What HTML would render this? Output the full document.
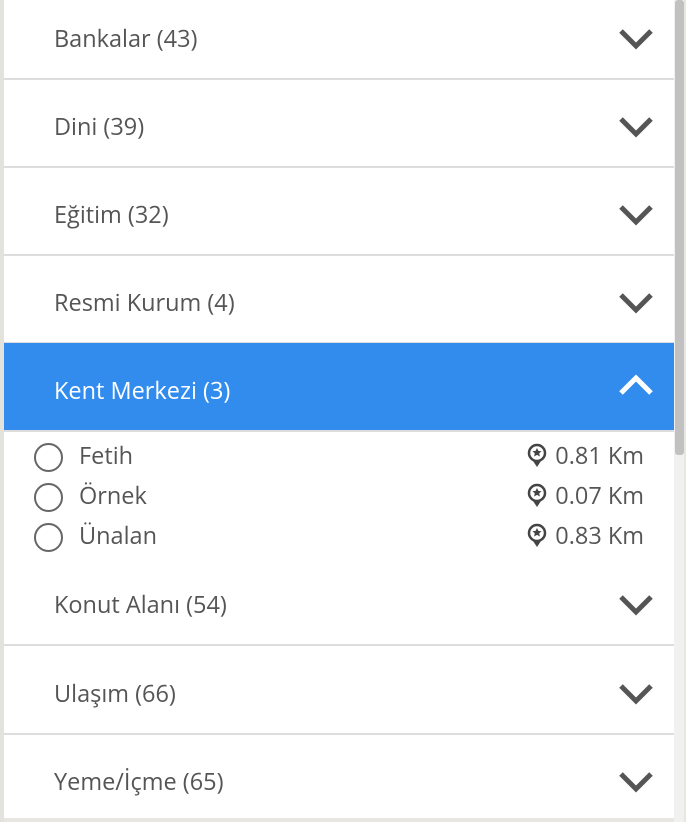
<!DOCTYPE html><html><head><style>
body{margin:0;width:686px;height:822px;overflow:hidden;background:#e8e6e1;font-family:"Open Sans","Liberation Sans",sans-serif;position:relative}
.map{position:absolute;left:0;top:0;width:4px;height:822px;background:#e4e2dc}
.panel{position:absolute;left:4px;top:0;width:670px;height:818px;background:#fff;overflow:hidden}
.sb{position:absolute;left:674px;top:0;width:10px;height:822px;background:#f1f1f1}
.th{position:absolute;left:675px;top:0;width:9px;height:455px;background:#c1c1c1;border-radius:3px}
.row{position:absolute;left:0;width:670px;height:87px;border-bottom:2px solid #ddd;color:#555;font-size:23.5px}
.row span{position:absolute;left:50px;top:50%;transform:translateY(-50%);margin-top:3px}
.row svg{position:absolute;left:614px;top:50%;margin-top:-7px}
.act{background:#318cee;color:#fff}
.it{position:absolute;left:30px;width:610px;height:40px;font-size:23.5px;color:#555}
.it .c{position:absolute;left:0;top:7px;width:25px;height:25px;border:2px solid #666;border-radius:50%}
.it .n{position:absolute;left:45px;top:3px}
.it .d{position:absolute;right:0;top:3px}
.it svg{position:absolute;left:492px;top:7px}
</style></head><body>
<div class="map"></div>
<div class="panel">
<div class="row" style="top:-9px"><span>Bankalar (43)</span><svg width="36" height="22"><path d="M3 3 L18 18 L33 3" stroke="#555" stroke-width="5" fill="none"/></svg></div>
<div class="row" style="top:79px"><span>Dini (39)</span><svg width="36" height="22"><path d="M3 3 L18 18 L33 3" stroke="#555" stroke-width="5" fill="none"/></svg></div>
<div class="row" style="top:167px"><span>Eğitim (32)</span><svg width="36" height="22"><path d="M3 3 L18 18 L33 3" stroke="#555" stroke-width="5" fill="none"/></svg></div>
<div class="row" style="top:255px"><span>Resmi Kurum (4)</span><svg width="36" height="22"><path d="M3 3 L18 18 L33 3" stroke="#555" stroke-width="5" fill="none"/></svg></div>
<div class="row act" style="top:343px"><span>Kent Merkezi (3)</span><svg width="36" height="22" style="margin-top:-13px"><path d="M3 19 L18 4 L33 19" stroke="#fff" stroke-width="5" fill="none"/></svg></div>
<div class="it" style="top:436px"><div class="c"></div><div class="n">Fetih</div><svg width="22" height="26"><circle cx="11" cy="10" r="8" stroke="#444" stroke-width="2.5" fill="none"/><path d="M11 5l1.4 2.9 3.2 .3-2.4 2.1 .7 3.2-2.9-1.6-2.9 1.6 .7-3.2-2.4-2.1 3.2-.3z" fill="#444"/><path d="M7 18 L11 24 L15 18z" fill="#444"/></svg><div class="d">0.81 Km</div></div>
<div class="it" style="top:476px"><div class="c"></div><div class="n">Örnek</div><svg width="22" height="26"><circle cx="11" cy="10" r="8" stroke="#444" stroke-width="2.5" fill="none"/><path d="M11 5l1.4 2.9 3.2 .3-2.4 2.1 .7 3.2-2.9-1.6-2.9 1.6 .7-3.2-2.4-2.1 3.2-.3z" fill="#444"/><path d="M7 18 L11 24 L15 18z" fill="#444"/></svg><div class="d">0.07 Km</div></div>
<div class="it" style="top:516px"><div class="c"></div><div class="n">Ünalan</div><svg width="22" height="26"><circle cx="11" cy="10" r="8" stroke="#444" stroke-width="2.5" fill="none"/><path d="M11 5l1.4 2.9 3.2 .3-2.4 2.1 .7 3.2-2.9-1.6-2.9 1.6 .7-3.2-2.4-2.1 3.2-.3z" fill="#444"/><path d="M7 18 L11 24 L15 18z" fill="#444"/></svg><div class="d">0.83 Km</div></div>
<div class="row" style="top:561px;height:83px"><span style="top:40px">Konut Alanı (54)</span><svg width="36" height="22" style="top:40px"><path d="M3 3 L18 18 L33 3" stroke="#555" stroke-width="5" fill="none"/></svg></div>
<div class="row" style="top:646px"><span>Ulaşım (66)</span><svg width="36" height="22"><path d="M3 3 L18 18 L33 3" stroke="#555" stroke-width="5" fill="none"/></svg></div>
<div class="row" style="top:734px;border:none"><span>Yeme/İçme (65)</span><svg width="36" height="22"><path d="M3 3 L18 18 L33 3" stroke="#555" stroke-width="5" fill="none"/></svg></div>
</div>
<div class="sb"></div><div class="th"></div>
</body></html>
